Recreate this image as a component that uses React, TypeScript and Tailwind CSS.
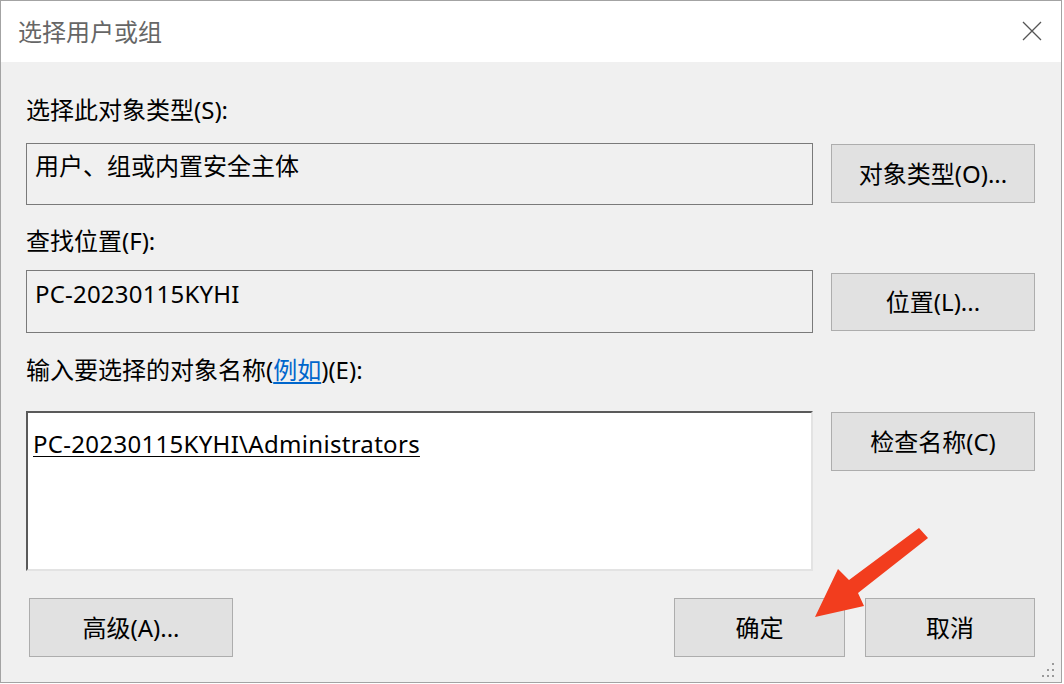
import React from "react";

const font = "font-['Noto_Sans','Noto_Sans_CJK_SC',sans-serif]";

const Btn = ({ text, className = "" }: { text: string; className?: string }) => (
  <div
    className={`flex items-center justify-center bg-[#e1e1e1] border border-[#adadad] text-[24px] leading-[32px] text-black ${className}`}
  >
    {text}
  </div>
);

export default function App() {
  return (
    <div className={`w-[1064px] h-[684px] bg-white ${font}`}>
      <div className="relative w-[1062px] h-[683px] border border-[#a3a3a3] flex flex-col bg-[#f0f0f0]">
        {/* title bar */}
        <div className="h-[61px] bg-white flex items-center justify-between pl-[17px] pr-[19px]">
          <span className="text-[24px] leading-[32px] text-[#666666]">选择用户或组</span>
          <svg width="20" height="20" viewBox="0 0 20 20" className="-mt-[2px]">
            <path d="M1 1 L19 19 M19 1 L1 19" stroke="#555" strokeWidth="1.3" fill="none" />
          </svg>
        </div>

        {/* body */}
        <div className="flex-1 flex flex-col pl-[25px] text-black">
          <div className="mt-[32px] h-[32px] text-[24px] leading-[32px]">选择此对象类型(S):</div>

          <div className="mt-[17px] flex items-start gap-[18px]">
            <div className="w-[787px] h-[62px] border border-[#7a7a7a] bg-[#f0f0f0] pl-[8px] pt-[6px] text-[24px] leading-[32px]">
              用户、组或内置安全主体
            </div>
            <Btn text="对象类型(O)..." className="mt-px w-[204px] h-[59px]" />
          </div>

          <div className="mt-[20px] h-[32px] text-[24px] leading-[32px]">查找位置(F):</div>

          <div className="mt-[13px] flex items-start gap-[18px]">
            <div className="w-[787px] h-[63px] border border-[#7a7a7a] bg-[#f0f0f0] pl-[8px] pt-[7px] text-[24px] leading-[32px] tracking-[0.2px]">
              PC-20230115KYHI
            </div>
            <Btn text="位置(L)..." className="mt-[3px] w-[204px] h-[58px]" />
          </div>

          <div className="mt-[21px] h-[32px] text-[24px] leading-[32px]">
            输入要选择的对象名称(<span className="text-[#0066cc] underline underline-offset-[3px]">例如</span>)(E):
          </div>

          <div className="mt-[25px] flex items-start gap-[18px]">
            <div className="w-[787px] h-[160px] border-2 border-t-[#5a5a5a] border-l-[#5a5a5a] border-r-[#e3e3e3] border-b-[#e3e3e3] bg-white pl-[5px] pt-[15px] text-[24px] leading-[32px] tracking-[0.3px]">
              <span className="underline underline-offset-[3px] decoration-1">PC-20230115KYHI\Administrators</span>
            </div>
            <Btn text="检查名称(C)" className="mt-px w-[204px] h-[59px]" />
          </div>

          <div className="mt-[27px] flex items-start">
            <Btn text="高级(A)..." className="ml-[3px] w-[204px] h-[59px]" />
            <div className="flex-1" />
            <div className="flex gap-[20px] pr-[26px]">
              <Btn text="确定" className="w-[171px] h-[59px]" />
              <Btn text="取消" className="w-[170px] h-[59px]" />
            </div>
          </div>
        </div>

        {/* resize grip */}
        <svg className="absolute right-[6px] bottom-[5px]" width="13" height="14" viewBox="0 0 13 14">
          <g fill="#9a9a9a">
            <rect x="10" y="0" width="2" height="2" />
            <rect x="5" y="6" width="2" height="2" />
            <rect x="10" y="6" width="2" height="2" />
            <rect x="0" y="12" width="2" height="2" />
            <rect x="5" y="12" width="2" height="2" />
            <rect x="10" y="12" width="2" height="2" />
          </g>
        </svg>

        {/* red annotation arrow */}
        <svg className="absolute -left-px -top-px pointer-events-none" width="1064" height="684" viewBox="0 0 1064 684">
          <polygon
            points="815,617 838,569 849,580 919,528 928,538 858,593 864,606"
            fill="#f23d1e"
          />
        </svg>
      </div>
    </div>
  );
}
